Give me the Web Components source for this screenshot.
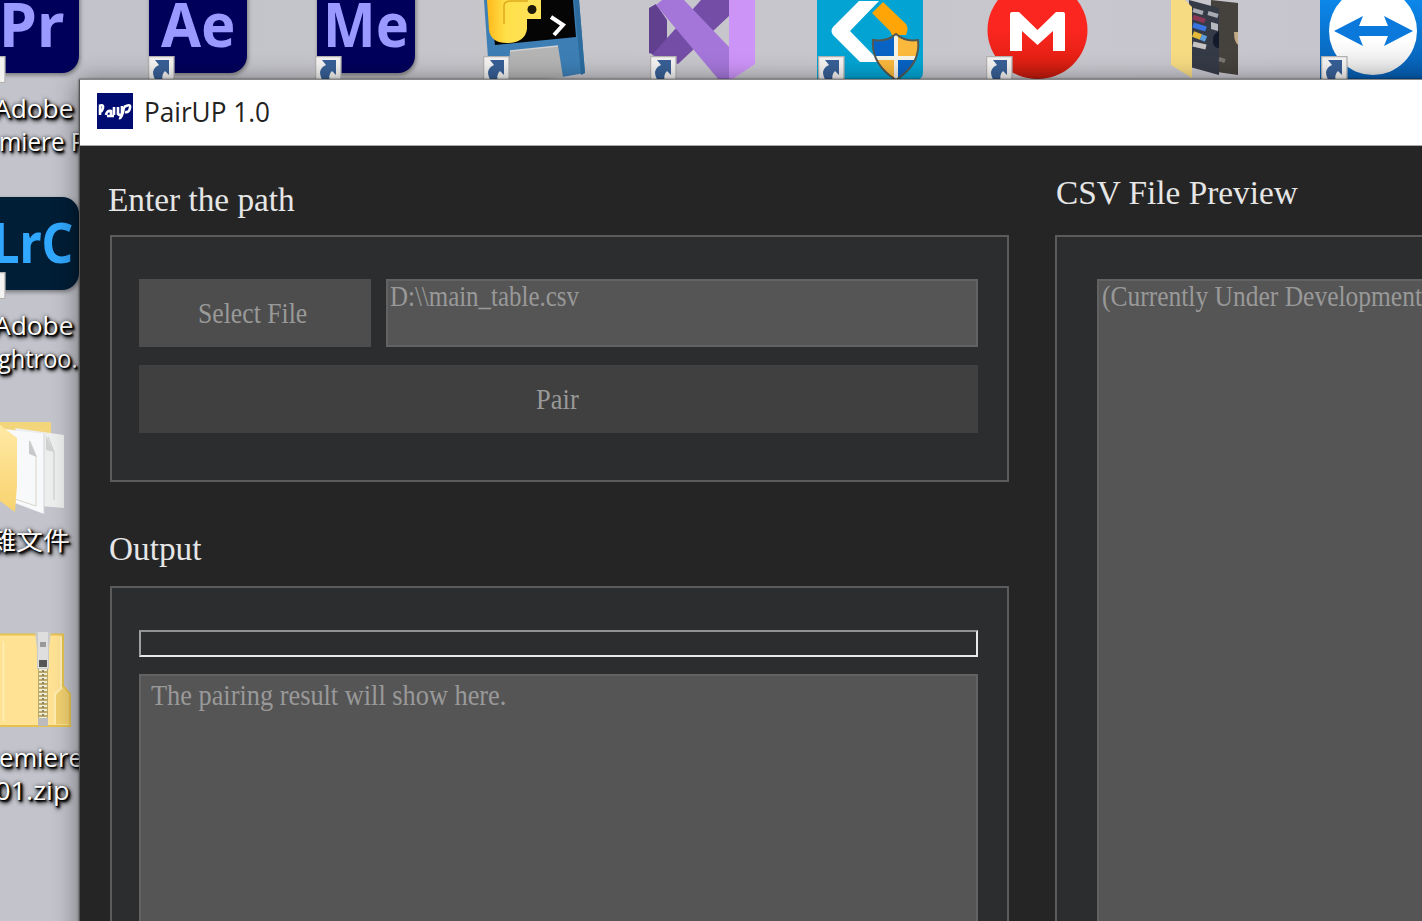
<!DOCTYPE html>
<html lang="en"><head><meta charset="utf-8"><title>PairUP 1.0</title>
<style>html,body{margin:0;height:100%;overflow:hidden}</style></head>
<body><pair-desktop></pair-desktop>
<script>
// Text whose natural width is condensed or widened to the width given in "w".
class FitText extends HTMLElement{
  connectedCallback(){
    const r=this.attachShadow({mode:'open'});
    r.innerHTML='<style>:host{display:block;white-space:pre;flex:none}span{display:inline-block;transform-origin:0 50%}</style><span><slot></slot></span>';
    const w=+this.getAttribute('w'),s=r.querySelector('span');
    this.style.width=w+'px';
    s.style.transform='scaleX('+w/s.offsetWidth+')';
  }
}
customElements.define('fit-text',FitText);

// Icon on the desktop: artwork in the slot, optional shortcut badge.
class DesktopIcon extends HTMLElement{
  connectedCallback(){
    const [x,y,w,h]=this.getAttribute('box').split(' ').map(Number);
    const b=this.getAttribute('badge');
    const r=this.attachShadow({mode:'open'});
    r.innerHTML=`<style>:host{display:block;position:absolute;left:${x}px;top:${y}px;width:${w}px;height:${h}px}
    .badge{position:absolute;width:27px;height:27px}</style><slot></slot>`;
    if(b){const [bx,by]=b.split(' ').map(Number);
      r.innerHTML+=`<svg class="badge" style="left:${bx-x}px;top:${by-y}px" viewBox="0 0 27 27"><rect x=".6" y=".6" width="25.4" height="26" fill="#f4f3f2" stroke="#b4b3b2" stroke-width="1.3"/><path d="M7 4H21V19L17 15Q13 18 15 27H10Q5 22 5 16Q6 11 11 9Z" fill="#386097"/></svg>`;}
  }
}
customElements.define('desktop-icon',DesktopIcon);

class AdobeTile extends HTMLElement{
  connectedCallback(){
    this.attachShadow({mode:'open'}).innerHTML=`<style>:host{display:flex;width:98px;height:94px;box-sizing:border-box;border-radius:17px;background:var(--tile,#00005b);color:var(--ink,#9999ff);
    font:700 61px/72px "Noto Sans","Open Sans",sans-serif;box-shadow:1px 2px 4px #0006;padding:var(--pad)}</style><slot></slot>`;
  }
}
customElements.define('adobe-tile',AdobeTile);

class IconLabel extends HTMLElement{
  connectedCallback(){
    this.attachShadow({mode:'open'}).innerHTML=`<style>:host{display:flex;flex-direction:column;position:absolute;left:0;top:${this.getAttribute('y')}px;
    font:25px/33px "Open Sans","Noto Sans","Noto Sans CJK TC",sans-serif;color:#fff;text-shadow:1px 1px 1px #000,2px 2px 2px #000,2px 3px 4px #000,0 0 4px #000a}</style><slot></slot>`;
  }
}
customElements.define('icon-label',IconLabel);

class GroupPanel extends HTMLElement{
  connectedCallback(){
    this.attachShadow({mode:'open'}).innerHTML=`<style>:host{display:flex;flex-direction:column;box-sizing:border-box;border:2px solid #5b5b5c;background:#2c2d2f;padding:42px 29px 0 27px;gap:18px}
    ::slotted(.row){display:flex;gap:15px}</style><slot></slot>`;
  }
}
customElements.define('group-panel',GroupPanel);

class PushButton extends HTMLElement{
  connectedCallback(){
    this.attachShadow({mode:'open'}).innerHTML=`<style>:host{display:flex;justify-content:center;box-sizing:border-box;height:68px;flex:none;background:var(--face,#404040);color:#999;padding-top:15px}</style><slot></slot>`;
  }
}
customElements.define('push-button',PushButton);

class TextArea extends HTMLElement{
  connectedCallback(){
    this.attachShadow({mode:'open'}).innerHTML=`<style>:host{display:flex;box-sizing:border-box;border:2px solid #626262;background:#555;color:#999;flex:1;overflow:hidden}</style><slot></slot>`;
  }
}
customElements.define('text-area',TextArea);

class ProgressTrack extends HTMLElement{
  connectedCallback(){
    this.attachShadow({mode:'open'}).innerHTML=`<style>:host{display:block;box-sizing:border-box;height:27px;flex:none;border:2px solid;border-color:#929292 #e8e8e8 #e8e8e8 #a0a0a0;margin-bottom:-1px}</style>`;
  }
}
customElements.define('progress-track',ProgressTrack);

class AppWindow extends HTMLElement{
  connectedCallback(){
    this.attachShadow({mode:'open'}).innerHTML=`<style>
    :host{display:flex;flex-direction:column;position:absolute;left:79px;top:79px;width:1400px;height:900px;background:#252525;border-left:1px solid #555;border-top:1px solid #888;box-shadow:0 0 2px #0009,0 3px 24px #0007}
    header{display:flex;align-items:center;height:66px;box-sizing:border-box;background:#fff;border-bottom:1px solid #aaa;padding-left:17px;gap:11px;color:#222;font:27px/38px "Open Sans","Noto Sans",sans-serif}
    header svg{width:36px;height:36px;margin-bottom:3px}
    header fit-text{margin-top:-1px}
    main{display:grid;grid-template-columns:899px 1fr;column-gap:46px;padding-left:30px;flex:1;font:29px/38px "Liberation Serif",serif}
    section{display:flex;flex-direction:column}
    .h{box-sizing:border-box;color:#e6e6e6;font-size:34px}
    .a{height:89px;padding-top:35px;margin-left:-2px}.b{height:104px;padding-top:48px;margin-left:-1px}.c{height:89px;padding-top:28px;margin-left:1px}
    </style>
    <header><svg viewBox="0 0 36 36"><path fill="#000c72" d="M0 0H36V36H0z"/><path d="M3 13v9M2 13q5-2 4 2t-3 3M9 22q1-5 5-4v5m-4 0h7m0-1v-8m4 0v7q2 2 4 0v-8m2 1q-2 12-5 11m5-11q7-4 6 1t-5 4" fill="none" stroke="#fff" stroke-width="2.6"/></svg><fit-text w="126">PairUP 1.0</fit-text></header>
    <main><section>
      <div class="h a"><fit-text w="187">Enter the path</fit-text></div>
      <group-panel style="height:247px"><div class="row">
        <push-button style="width:232px;--face:#4d4d4d;padding-right:5px"><fit-text w="109">Select File</fit-text></push-button>
        <text-area style="padding:0 0 0 2px"><fit-text w="189" style="margin-top:-4px">D:\\\\main_table.csv</fit-text></text-area>
      </div><push-button style="padding-right:2px"><fit-text w="43">Pair</fit-text></push-button></group-panel>
      <div class="h b"><fit-text w="92">Output</fit-text></div>
      <group-panel style="flex:1"><progress-track></progress-track>
        <text-area style="padding:0 0 0 10px"><fit-text w="355">The pairing result will show here.</fit-text></text-area></group-panel>
    </section><section>
      <div class="h c"><fit-text w="242">CSV File Preview</fit-text></div>
      <group-panel style="flex:1;padding-left:40px"><text-area style="padding:0 0 0 3px"><fit-text w="320" style="margin-top:-4px">(Currently Under Development</fit-text></text-area></group-panel>
    </section></main>`;
  }
}
customElements.define('app-window',AppWindow);

class PairDesktop extends HTMLElement{
  connectedCallback(){
    this.attachShadow({mode:'open'}).innerHTML=`<style>
    :host{display:block;position:relative;width:100vw;height:100vh;overflow:hidden;background:linear-gradient(90deg,#c2c3cb,#c5c5ca 35%,#c8c7ce 75%,#c5c4cc)}
    desktop-icon>svg{display:block;width:100%;height:100%}</style>
    <desktop-icon box="-19 -21 98 94" badge="-21 56"><adobe-tile style="--pad:9px 0 0 18px"><fit-text w="65">Pr</fit-text></adobe-tile></desktop-icon>
    <desktop-icon box="149 -21 98 94" badge="148 56"><adobe-tile style="--pad:9px 0 0 12px"><fit-text w="75">Ae</fit-text></adobe-tile></desktop-icon>
    <desktop-icon box="317 -21 98 94" badge="315 56"><adobe-tile style="--pad:9px 0 0 6px"><fit-text w="86">Me</fit-text></adobe-tile></desktop-icon>

    <desktop-icon box="480 0 110 80" badge="483 56"><svg viewBox="480 0 110 80">
      <path d="M484 0H579L585 73L562 77L489 73Z" fill="#3d7fb5"/><path d="M579 0L585 73L581 75L574 0Z" fill="#2c6c9f"/><path d="M490 0H573L576 37L495 45Z" fill="#050505"/>
      <path d="M510 51L558 46L563 77L508 83Z" fill="#b4b4b4"/><path d="M510 51L558 46" stroke="#d0d0d0" stroke-width="1.5"/>
      <defs><linearGradient id="py"><stop stop-color="#ffb91a"/><stop offset=".35" stop-color="#ffe04a"/><stop offset="1" stop-color="#ffe25a"/></linearGradient></defs>
      <path d="M487 0H541V19H527V29Q525 43 507 43Q491 43 489 30Z" fill="url(#py)"/><path d="M504 24V6Q504 1 511 1H528" fill="none" stroke="#e0a91f" stroke-width="1.5"/><circle cx="532" cy="9.500" r="4.500" fill="#1d1808"/>
      <path d="M551 17L563 25L554 35" fill="none" stroke="#fff" stroke-width="4"/></svg></desktop-icon>

    <desktop-icon box="645 0 115 80" badge="650 56"><svg viewBox="645 0 115 80">
      <path d="M649 8L656 4L667 20V46L655 55L649 53Z" fill="#60408f"/><path d="M701 0H729V16L678 64L652 55Z" fill="#744da6"/>
      <path d="M656 5L662 0H684L729 47V80H719Z" fill="#a476da"/><path d="M729 0H755V64L731 80H729Z" fill="#cd94f8"/></svg></desktop-icon>

    <desktop-icon box="817 0 107 80" badge="818 56"><svg viewBox="817 0 107 80"><path d="M817 0H923V72Q923 80 915 80H817Z" fill="#03a4d3"/>
      <path d="M859 1H879L850 31L880 62H860L833 35Q830 31 833 27Z" fill="#fff"/><path d="M883 2L906 24Q909 28 906 35H892L890 31L872 13Z" fill="#ffa506"/>
      <clipPath id="sh"><path d="M896 34Q905 42 918 40Q921 64 896 80Q871 64 873 40Q887 42 896 34Z"/></clipPath>
      <g clip-path="url(#sh)"><path fill="#0863c4" d="M870 30H896V57H870zM896 57H922V82H896z"/><path fill="#fab83d" d="M896 30H922V57H896zM870 57H896V82H870z"/><path d="M896 30V82M870 58H922" stroke="#f5f3e8" stroke-width="4"/></g>
      <path d="M896 34Q905 42 918 40Q921 64 896 80Q871 64 873 40Q887 42 896 34Z" fill="none" stroke="#555850" stroke-width="2"/></svg></desktop-icon>

    <desktop-icon box="985 0 105 80" badge="986 56"><svg viewBox="985 0 105 80"><defs><linearGradient id="mg" x2="0" y2="1"><stop stop-color="#fa261f"/><stop offset=".5" stop-color="#fa261f"/><stop offset=".8" stop-color="#e52014"/><stop offset="1" stop-color="#bd1b0d"/></linearGradient></defs>
      <ellipse cx="1037.500" cy="30" rx="50" ry="49" fill="url(#mg)"/><path d="M1012 12H1019L1037.500 30L1056 12H1063Q1065 12 1065 14V51H1053V31L1037.500 45L1022 31V51H1010V14Q1010 12 1012 12Z" fill="#fff"/></svg></desktop-icon>

    <desktop-icon box="1165 0 80 80"><svg viewBox="1165 0 80 80"><path d="M1211 0L1238 3V75L1210 71Z" fill="#45413c"/><path d="M1189 0L1219 8V75L1190 67Z" fill="#353a47"/>
      <path d="M1171 0H1185L1192 7V78L1171 65Z" fill="#f7db83"/>
      <path d="M1193 10L1203 13M1208 13L1218 16" stroke="#a9abb2" stroke-width="4"/><path d="M1193 17L1205 21" stroke="#8b3655" stroke-width="5"/><path d="M1193 25L1206 29" stroke="#3973dd" stroke-width="5"/><path d="M1193 34L1201 37" stroke="#e4b839" stroke-width="6"/><path d="M1201 37L1206 39" stroke="#5a9dda" stroke-width="6"/><path d="M1193 44L1206 47" stroke="#c5c4c2" stroke-width="5"/><path d="M1211 22L1218 24V31L1211 29Z" fill="#b5b8bd"/><path d="M1219 31Q1212 34 1213 43Q1214 48 1219 48Z" fill="#131a2b"/><path d="M1234 32H1238V45Q1234 42 1234 32Z" fill="#c4a987"/><path d="M1219 59L1225 61" stroke="#797570" stroke-width="4"/></svg></desktop-icon>

    <desktop-icon box="1320 0 102 80" badge="1321 56"><svg viewBox="1320 0 102 80"><defs><linearGradient id="tv" x2="0" y2="1"><stop stop-color="#0c87ea"/><stop offset="1" stop-color="#075cae"/></linearGradient><linearGradient id="wh" x2="0" y2="1"><stop offset=".6" stop-color="#fff"/><stop offset="1" stop-color="#e4e4e4"/></linearGradient></defs><path d="M1320 0H1422V80H1320z" fill="url(#tv)"/><circle cx="1373" cy="31" r="44" fill="url(#wh)"/>
      <path d="M1334 31L1363 16L1359 26H1388L1384 16L1413 31L1384 46L1388 36H1359L1363 46Z" fill="#0b79dc"/></svg></desktop-icon>

    <icon-label y="92"><fit-text w="79" style="margin-left:-6px">Adobe</fit-text><fit-text w="86" style="margin-left:-1px">miere P</fit-text></icon-label>
    <desktop-icon box="-19 197 98 94" badge="-21 272"><adobe-tile style="height:93px;font-size:56px;--tile:#001e36;--ink:#31a8ff;--pad:8px 0 0 11px"><fit-text w="81">LrC</fit-text></adobe-tile></desktop-icon>
    <icon-label y="309"><fit-text w="79" style="margin-left:-6px">Adobe</fit-text><fit-text w="80" style="margin-left:-2px">ghtroo.</fit-text></icon-label>

    <desktop-icon box="0 415 75 105"><svg viewBox="0 415 75 105"><defs><linearGradient id="fo" x2="0" y2="1"><stop stop-color="#ffe9a4"/><stop offset="1" stop-color="#f8d36f"/></linearGradient></defs>
      <path d="M0 422H51V450H0z" fill="#f3d57c"/><path d="M15 428L64 435V508L40 506Z" fill="#eceded"/><path d="M48 437L54 452V500" fill="none" stroke="#c9cac8"/><path d="M46 436L54 452L46 450Z" fill="#cfd0cf"/>
      <path d="M5 429L44 434V514L15 503Z" fill="#f8f9fa"/><path d="M30 441L36 456V506L15 499" fill="none" stroke="#d8d5ca"/><path d="M29 440L37 457L29 454Z" fill="#c8c9ca"/><path d="M44 434V514" stroke="#d2d3d4"/><path d="M0 425L17 438V485L15 512L0 501Z" fill="url(#fo)"/></svg></desktop-icon>
    <icon-label y="524"><fit-text w="81" style="margin-left:-11px">雜文件</fit-text></icon-label>

    <desktop-icon box="0 628 75 102"><svg viewBox="0 628 75 102"><path d="M0 634H63V686L70 694V726H0z" fill="#ffe293"/><path d="M0 634.500H63V686L70 694V726H0" fill="none" stroke="#e5c250" stroke-width="2"/><path d="M3.500 641V721M61 637V688L55 694V724" fill="none" stroke="#fff0b9" stroke-width="1.500"/><path d="M56 695L63 688L69 695V724H56Z" fill="#f2d070"/>
      <path d="M38 668H48V719H38Z" fill="#bba968"/><path d="M43 669V718" stroke="#f0ecd8" stroke-width="8" stroke-dasharray="2 2"/><path d="M43 670V718" stroke="#908567" stroke-width="2" stroke-dasharray="2 2"/><path d="M35 632H51L49 649V669H37V649Z" fill="#c9c9c7"/><path d="M38 632H48V668H38Z" fill="#dedede"/><path d="M40 642H46V647H40z" fill="#999"/><path d="M39 660H47V667H39z" fill="#555"/><path d="M38 718H48V726H38z" fill="#bbb"/></svg></desktop-icon>
    <icon-label y="741"><fit-text w="84" style="margin-left:-1px">emiere</fit-text><fit-text w="74" style="margin-left:-5px">01.zip</fit-text></icon-label>
    <app-window></app-window>`;
  }
}
customElements.define('pair-desktop',PairDesktop);
</script></body></html>
